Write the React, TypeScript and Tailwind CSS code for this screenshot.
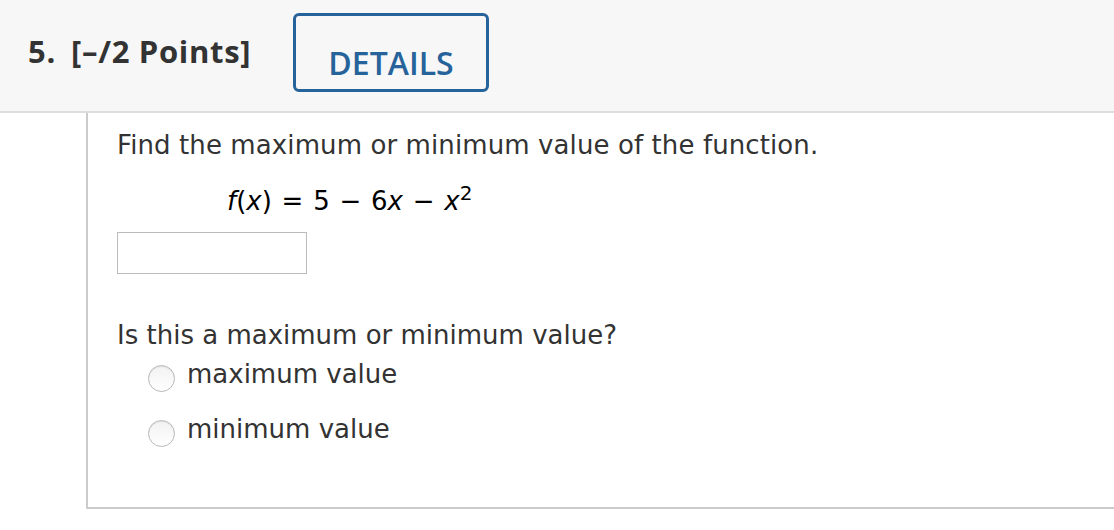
import React from "react";

function Radio({ label }: { label: string }) {
  return (
    <label className="flex items-start h-[55px]">
      <span className="mt-[19px] w-[27px] h-[27px] shrink-0 rounded-full border border-[#b8b8b8] bg-gradient-to-b from-[#f2f2f2] to-white shadow-[inset_0_1px_1px_rgba(0,0,0,0.08)] ml-[31px]" />
      <span className="mt-[12px] ml-[12px] text-[26px] leading-[32px] text-[#333]">{label}</span>
    </label>
  );
}

export default function App() {
  return (
    <div className="w-[1114px] h-[530px] bg-white overflow-hidden" style={{ fontFamily: '"DejaVu Sans", Verdana, sans-serif' }}>
      <div className="h-[113px] bg-[#f7f7f7] border-b-2 border-[#dddddd] flex items-start">
        <div className="w-[293px] shrink-0 flex items-baseline pl-[28px] pt-[32px] font-bold text-[31px] leading-[38px] tracking-[0.7px] text-[#333]" style={{ fontFamily: '"Open Sans", Lato, sans-serif' }}>
          <span>5.</span>
          <span className="ml-[15px]">[–/2 Points]</span>
        </div>
        <div className="mt-[13px] w-[196px] h-[79px] border-[3px] border-[#26639a] rounded-[6px] flex items-start justify-center pt-[27px] text-[#26639a] font-semibold text-[32px] leading-[40px]" style={{ fontFamily: '"Open Sans", Lato, sans-serif' }}>
          DETAILS
        </div>
      </div>
      <div className="ml-[86px] h-[396px] border-l-2 border-b-2 border-[#cccccc] pl-[29px] pt-[16px] text-[#333]">
        <div className="text-[26px] leading-[32px] tracking-[0.1px]">Find the maximum or minimum value of the function.</div>
        <div className="mt-[22px] ml-[110px] h-[32px] text-[26px] leading-[32px] text-black [word-spacing:1.5px]">
          <i>f</i>(<i>x</i>) = 5 − 6<i>x</i> − <i>x</i>
          <span className="text-[20px] leading-none align-[10px]">2</span>
        </div>
        <div className="mt-[17px] w-[190px] h-[42px] border border-[#bbbbbb] bg-white" />
        <div className="mt-[45px] text-[26px] leading-[32px]">Is this a maximum or minimum value?</div>
        <div className="mt-[-5px]">
          <Radio label="maximum value" />
          <Radio label="minimum value" />
        </div>
      </div>
    </div>
  );
}
